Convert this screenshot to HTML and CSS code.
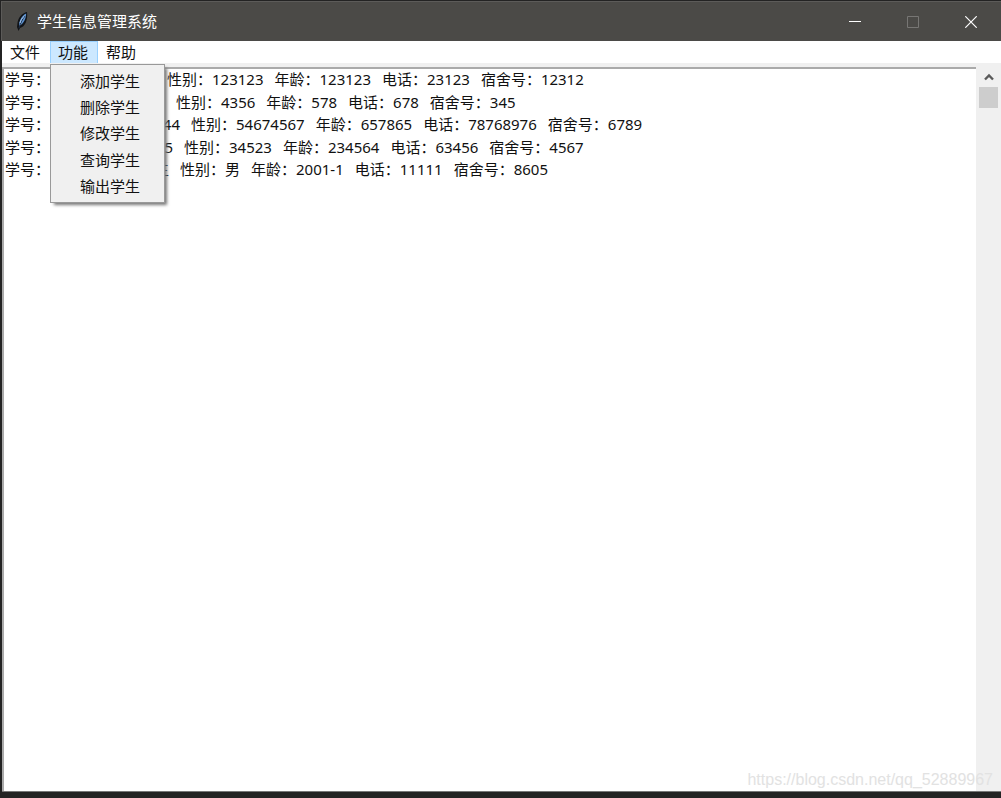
FILE: index.html
```html
<!DOCTYPE html>
<html lang="zh-CN">
<head>
<meta charset="utf-8">
<title>学生信息管理系统</title>
<link rel="stylesheet" href="styles.css">
</head>
<body>
<div class="window">
  <header class="titlebar">
    <svg class="feather" viewBox="0 0 16 20" aria-hidden="true">
      <path d="M13 0C8 1 4 6 3.500 11L3 15l1.500 4 1.500-3c5-1 8-8 7-16z" fill="#111418"/>
      <path d="M12.200 1.500C8 3.500 5.200 8 5 14c4.500-2 7-7 7.200-12.500z" fill="#5c91cf"/>
      <path d="M11 4C8.500 7 6.500 11 5 16" fill="none" stroke="#1e2c42" stroke-width="1"/>
      <path d="M10.500 4C8 6 6.500 8.500 6 11" fill="none" stroke="#a5c8ee" stroke-width="1"/>
    </svg>
    <h1 class="title">学生信息管理系统</h1>
    <button class="control" aria-label="最小化"><svg viewBox="0 0 12 12"><path d="M0 5.500h12" stroke="#fff"/></svg></button>
    <button class="control" aria-label="最大化" disabled><svg viewBox="0 0 12 12"><path d="M.5.500h11v11H.5z" fill="none" stroke="#777674"/></svg></button>
    <button class="control" aria-label="关闭"><svg viewBox="0 0 12 12"><path d="M.3.300l11.400 11.400M11.700.300L.3 11.700" stroke="#fff" stroke-width="1.200"/></svg></button>
  </header>
  <nav class="menubar">
    <button class="menu-button">文件</button>
    <div class="menu-group">
      <button class="menu-button active" aria-expanded="true">功能</button>
      <div class="dropdown" role="menu">
        <button class="menu-item" role="menuitem">添加学生</button>
        <button class="menu-item" role="menuitem">删除学生</button>
        <button class="menu-item" role="menuitem">修改学生</button>
        <button class="menu-item" role="menuitem">查询学生</button>
        <button class="menu-item" role="menuitem">输出学生</button>
      </div>
    </div>
    <button class="menu-button">帮助</button>
  </nav>
  <main class="content">
    <div class="records">
      <div class="rows">
        <div class="row"><span class="lead" style="width:151px">学号：</span><span>性别：123123</span><span>年龄：123123</span><span>电话：23123</span><span>宿舍号：12312</span></div>
        <div class="row"><span class="lead" style="width:160px">学号：</span><span>性别：4356</span><span>年龄：578</span><span>电话：678</span><span>宿舍号：345</span></div>
        <div class="row"><span class="lead" style="width:175px">学号：<span>44</span></span><span>性别：54674567</span><span>年龄：657865</span><span>电话：78768976</span><span>宿舍号：6789</span></div>
        <div class="row"><span class="lead" style="width:168px">学号：<span>5</span></span><span>性别：34523</span><span>年龄：234564</span><span>电话：63456</span><span>宿舍号：4567</span></div>
        <div class="row"><span class="lead" style="width:164px">学号：<span>生</span></span><span>性别：男</span><span>年龄：2001-1</span><span>电话：11111</span><span>宿舍号：8605</span></div>
      </div>
    </div>
    <div class="scrollbar">
      <button class="scroll-up" aria-label="向上滚动"><svg viewBox="0 0 10 8"><path d="M1 6.500l4-4 4 4" fill="none" stroke="#5a5a5a" stroke-width="2.400"/></svg></button>
      <div class="thumb"></div>
    </div>
    <span class="watermark">https://blog.csdn.net/qq_52889967</span>
  </main>
</div>
</body>
</html>
```
FILE: styles.css
```css
* { box-sizing: border-box; }
body {
  margin: 0;
  background: #232323;
  font: 15px "Noto Sans", "Noto Sans CJK SC", sans-serif;
  color: #111;
}
button {
  margin: 0;
  padding: 0;
  border: 0;
  background: none;
  font: inherit;
  color: inherit;
}
.window {
  display: flex;
  flex-direction: column;
  height: 100vh;
  padding: 1px 0 6px 1px;
}
.titlebar {
  display: flex;
  align-items: center;
  height: 40px;
  padding: 0 1px 0 12px;
  background: #4b4a47;
  border: solid #5c5b59;
  border-width: 1px 0 0 1px;
  color: #fff;
}
.feather { width: 16px; height: 20px; }
.title {
  flex: 1;
  margin: 0 0 0 7px;
  padding-bottom: 2px;
  font-size: 15px;
  font-weight: 400;
  line-height: 22px;
}
.control {
  display: flex;
  align-items: center;
  justify-content: center;
  width: 58px;
  height: 39px;
}
.control svg { width: 12px; height: 12px; }
.menubar {
  display: flex;
  height: 22px;
  background: #fff;
  margin-left: 1px;
}
.menu-group { position: relative; }
.menu-button {
  width: 48px;
  height: 24px;
  padding: 0 2px 2px 0;
  border: 1px solid transparent;
  line-height: 20px;
}
.menu-button.active {
  background: #cce8ff;
  border-color: #99d1ff;
}
.dropdown {
  position: absolute;
  z-index: 2;
  top: 23px;
  left: 0;
  display: grid;
  grid-auto-rows: 1fr;
  width: 115px;
  height: 139px;
  padding: 3px 2px;
  background: #f0f0f0;
  border: 1px solid #999;
  box-shadow: 3px 3px 3px -1px #777;
}
.menu-item {
  padding-left: 27px;
  line-height: 24px;
  text-align: left;
}
.content {
  position: relative;
  flex: 1;
  display: flex;
  margin-left: 1px;
  padding-top: 4px;
  background: #f0f0f0;
  border-bottom: 1px solid #777;
}
.records {
  flex: 1;
  margin-right: 3px;
  padding-left: 1px;
  background: #fff;
  border: solid #aaa;
  border-width: 2px 0 0 2px;
}
.rows {
  display: grid;
  grid-auto-rows: 1fr;
  height: 113px;
}
.row {
  display: flex;
  gap: 11px;
  line-height: 20px;
  white-space: nowrap;
}
.lead {
  display: flex;
  justify-content: space-between;
}
.scrollbar {
  width: 22px;
  padding-right: 2px;
}
.scroll-up {
  display: flex;
  align-items: center;
  justify-content: center;
  width: 20px;
  height: 20px;
}
.scroll-up svg { width: 10px; height: 8px; }
.thumb {
  width: 19px;
  height: 21px;
  background: #cdcdcd;
}
.watermark {
  position: absolute;
  right: 8px;
  bottom: 2px;
  font: 16px "Liberation Sans", sans-serif;
  color: #e2e2e2;
}
```
